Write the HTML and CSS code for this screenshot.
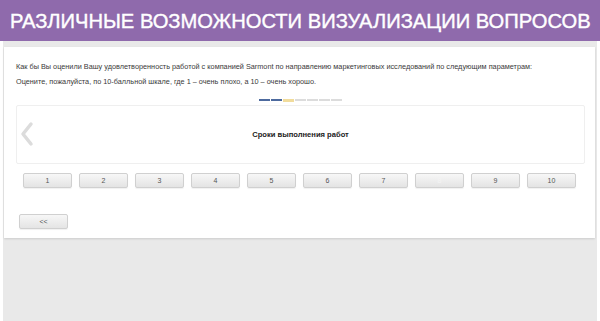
FILE: index.html
```html
<!DOCTYPE html>
<html>
<head>
<meta charset="utf-8">
<link rel="stylesheet" href="styles.css">
</head>
<body>
<div class="header"><span class="header-text">РАЗЛИЧНЫЕ ВОЗМОЖНОСТИ ВИЗУАЛИЗАЦИИ ВОПРОСОВ</span></div>
<div class="stage">
  <div class="card">
    <p class="q">Как бы Вы оценили Вашу удовлетворенность работой с компанией Sarmont по направлению маркетинговых исследований по следующим параметрам:</p>
    <p class="q q2">Оцените, пожалуйста, по 10-балльной шкале, где 1 – очень плохо, а 10 – очень хорошо.</p>
    <div class="progress">
      <span class="seg done"></span><span class="seg done"></span><span class="seg cur"></span><span class="seg"></span><span class="seg"></span><span class="seg"></span><span class="seg"></span>
    </div>
    <div class="slide">
      <svg class="chev" width="16" height="26" viewBox="0 0 16 26"><path d="M12 3 L4 13 L12 23" fill="none" stroke="#dcdcdc" stroke-width="3.5" stroke-linecap="round" stroke-linejoin="round"/></svg>
      <div class="slide-title">Сроки выполнения работ</div>
    </div>
    <div class="scale">
      <button class="btn">1</button><button class="btn">2</button><button class="btn">3</button><button class="btn">4</button><button class="btn">5</button><button class="btn">6</button><button class="btn">7</button><button class="btn faded">8</button><button class="btn">9</button><button class="btn">10</button>
    </div>
    <div class="nav"><button class="btn back">&lt;&lt;</button></div>
  </div>
</div>
</body>
</html>
```
FILE: styles.css
```css
html, body { margin: 0; padding: 0; background: #fff; }
body { width: 600px; height: 321px; overflow: hidden; font-family: "Liberation Sans", Arial, sans-serif; }
.header {
  height: 41px;
  background: #8f6aac;
  color: #fff;
  font-size: 21px;
  line-height: 41px;
  padding-left: 10px;
  white-space: nowrap;
  overflow: hidden;
}
.header-text {
  display: inline-block;
  transform: scaleX(0.96);
  transform-origin: left center;
  -webkit-text-stroke: 0.4px #fff;
}
.stage {
  margin: 0 3px;
  height: 280px;
  background: #e9e9e9;
  padding: 6px 2px 0 1px;
  box-sizing: border-box;
}
.card {
  background: #fff;
  height: 191px;
  box-shadow: 0 1px 2px rgba(0,0,0,0.12);
  padding: 15px 10px 0 12px;
  box-sizing: border-box;
  position: relative;
}
.q { margin: 0; font-size: 7.3px; color: #3a3a3a; line-height: 10px; white-space: nowrap; }
.q2 { margin-top: 5px; }
.progress { display: flex; justify-content: center; gap: 1px; margin-top: 12px; height: 2px; }
.seg { width: 11px; height: 2px; background: #dcdcdc; }
.seg.done { background: #4d6a9e; }
.seg.cur { background: #f1dc9c; height: 3px; }
.slide {
  margin-top: 4px;
  height: 57px;
  border: 1px solid #efefef;
  border-radius: 2px;
  display: flex;
  align-items: center;
  position: relative;
}
.chev { position: absolute; left: 2px; top: 15px; }
.slide-title { flex: 1; text-align: center; font-size: 7.6px; font-weight: bold; color: #222; }
.scale { display: flex; gap: 7px; padding-left: 7px; margin-top: 9px; }
.btn {
  width: 49px;
  height: 15px;
  padding: 0;
  border: 1px solid #d0d0d0;
  border-radius: 2px;
  background: linear-gradient(#f7f7f7, #e4e4e4);
  font-family: "Liberation Sans", Arial, sans-serif;
  font-size: 7px;
  color: #555;
  box-shadow: 0 1px 1px rgba(0,0,0,0.06);
}
.btn.faded { color: #f4f4f4; }
.nav { margin-top: 22px; padding-left: 3px; }
.back { width: 49px; }
```
